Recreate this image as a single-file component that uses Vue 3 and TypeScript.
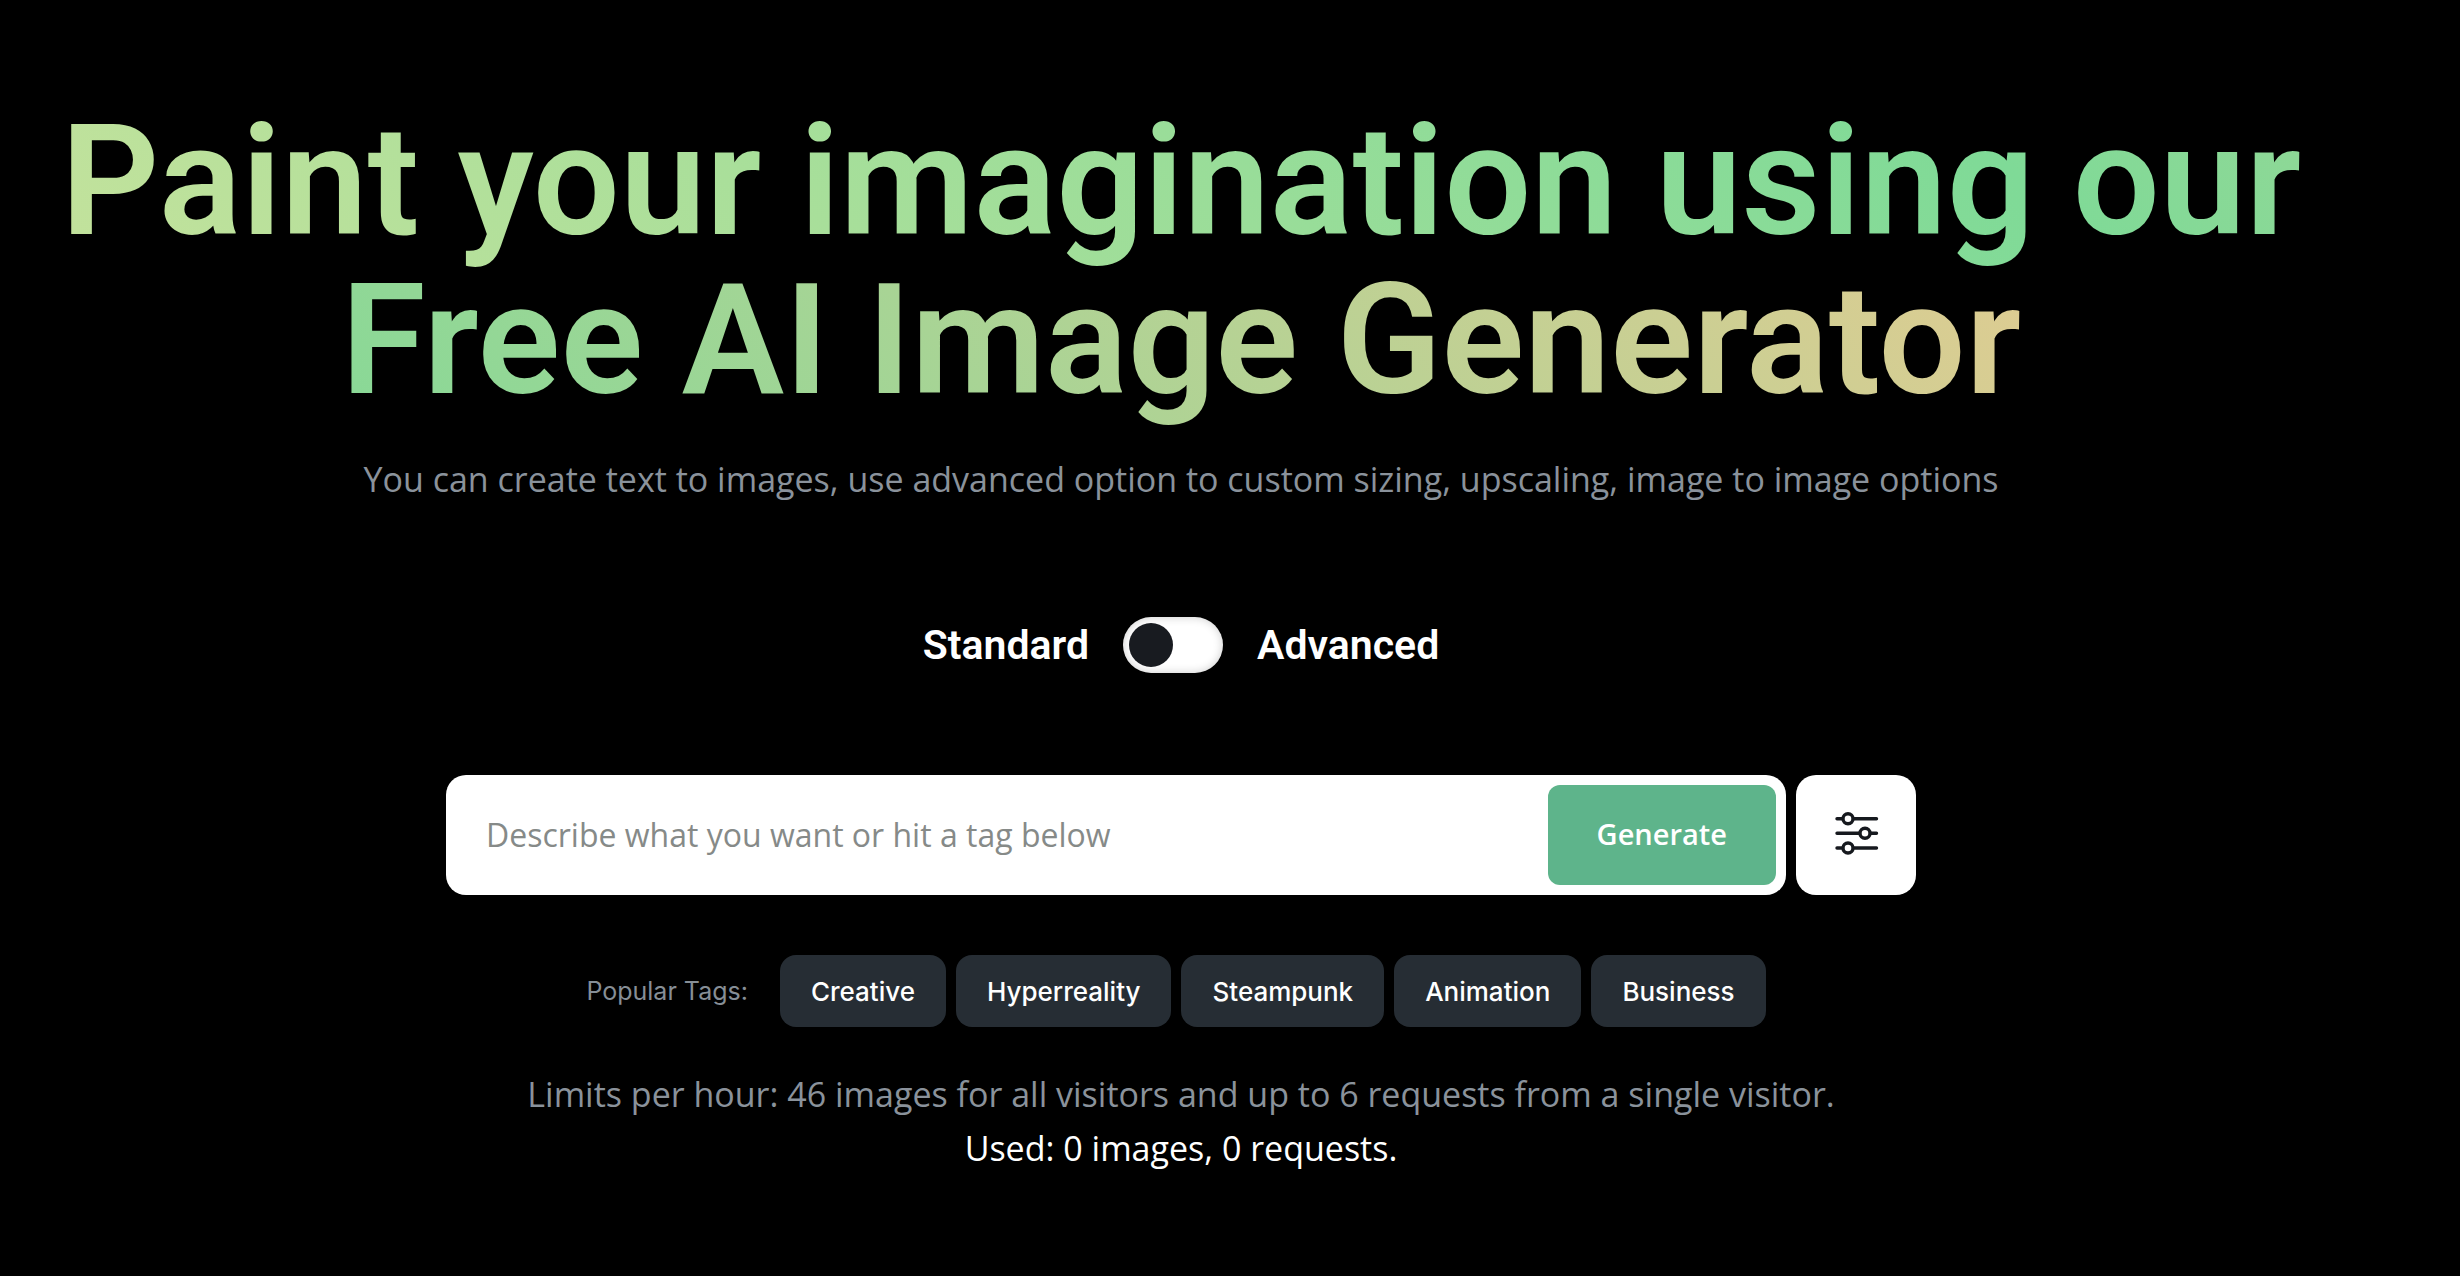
<script setup lang="ts">
import { ref } from 'vue'

const tags: string[] = ['Creative', 'Hyperreality', 'Steampunk', 'Animation', 'Business']
const prompt = ref('')
const advanced = ref(false)
const usedImages = ref(0)
const usedRequests = ref(0)

function addTag(tag: string): void {
  prompt.value = prompt.value ? `${prompt.value}, ${tag}` : tag
}
</script>

<template>
  <main class="page">
    <h1 class="title"><span class="gradient">Paint your imagination using our Free AI Image Generator</span></h1>
    <p class="text">You can create text to images, use advanced option to custom sizing, upscaling, image to image options</p>

    <div class="mode">
      <label for="mode-switch">Standard</label>
      <input id="mode-switch" v-model="advanced" class="switch" type="checkbox" role="switch" />
      <label for="mode-switch">Advanced</label>
    </div>

    <form class="search" @submit.prevent>
      <div class="field">
        <input v-model="prompt" class="prompt" type="text" aria-label="Prompt" placeholder="Describe what you want or hit a tag below" />
        <button class="generate" type="submit">Generate</button>
      </div>
      <button class="settings" type="button" aria-label="Settings">
        <svg viewBox="0 0 48 48" width="48" height="48" fill="none" stroke="#16191e" stroke-width="3.4" stroke-linecap="round">
          <path d="M5 7.700H10.500M21.500 7.700H44.500M5 22.300H27.500M38.500 22.300H44.500M5 37H10.500M21.500 37H44.500" />
          <circle cx="16" cy="7.700" r="5" />
          <circle cx="33" cy="22.300" r="5" />
          <circle cx="16" cy="37" r="5" />
        </svg>
      </button>
    </form>

    <div class="tags">
      <span class="tags-label">Popular Tags:</span>
      <button v-for="tag in tags" :key="tag" class="tag" type="button" @click="addTag(tag)">{{ tag }}</button>
    </div>

    <div class="limits">
      <p class="text">Limits per hour: 46 images for all visitors and up to 6 requests from a single visitor.</p>
      <p class="text used">Used: {{ usedImages }} images, {{ usedRequests }} requests.</p>
    </div>
  </main>
</template>

<style>
body {
  margin: 0;
  background: #000;
}
</style>

<style scoped>
.page {
  box-sizing: border-box;
  min-height: 100vh;
  padding: 102px 98px 100px 0;
  display: flex;
  flex-direction: column;
  align-items: center;
  background: #000;
  color: #fff;
  font-family: "Open Sans", "Noto Sans", sans-serif;
}

.title {
  margin: 0 0 32px;
  font-family: Roboto, sans-serif;
  font-size: 154px;
  font-weight: 600;
  line-height: 159px;
  text-align: center;
}

.gradient {
  background: linear-gradient(45deg, #c3e29c 0%, #7fda97 50%, #dfcc92 100%);
  -webkit-background-clip: text;
  background-clip: text;
  color: transparent;
}

.text {
  margin: 0;
  color: #8a929b;
  font-size: 34px;
  line-height: 54px;
  text-align: center;
}

.mode {
  display: flex;
  align-items: center;
  gap: 34px;
  margin: 111px 0 102px;
  font-family: Roboto, sans-serif;
  font-size: 41px;
  font-weight: 600;
  line-height: 56px;
}

.switch {
  appearance: none;
  box-sizing: border-box;
  width: 100px;
  height: 56px;
  margin: 0;
  padding: 6px;
  border-radius: 28px;
  background: #fff;
  box-shadow: inset 0 0 10px rgba(0, 0, 0, 0.2);
  cursor: pointer;
}

.switch::before {
  content: "";
  display: block;
  width: 44px;
  height: 44px;
  border-radius: 50%;
  background: #181b20;
}

.switch:checked::before {
  margin-left: auto;
}

.search {
  display: flex;
  gap: 10px;
  width: 100%;
  max-width: 1470px;
}

.field {
  flex: 1;
  display: flex;
  box-sizing: border-box;
  height: 120px;
  padding: 10px;
  border-radius: 20px;
  background: #fff;
}

.prompt {
  flex: 1;
  min-width: 0;
  padding: 0 30px 2px;
  border: 0;
  outline: 0;
  background: transparent;
  color: #16191e;
  font-family: inherit;
  font-size: 32px;
}

.prompt::placeholder {
  color: #868a88;
  opacity: 1;
}

.generate {
  padding: 0 49px 4px;
  border: 0;
  border-radius: 12px;
  background: #5eb48b;
  color: #fff;
  font-family: inherit;
  font-size: 29px;
  font-weight: 600;
  cursor: pointer;
}

.settings {
  display: flex;
  align-items: center;
  justify-content: center;
  width: 120px;
  padding: 0;
  border: 0;
  border-radius: 20px;
  background: #fff;
  cursor: pointer;
}

.tags {
  display: flex;
  align-items: center;
  margin: 60px 0 40px;
  font-family: Inter, sans-serif;
  line-height: 36px;
}

.tags-label {
  margin-right: 32px;
  color: #868e96;
  font-size: 25px;
}

.tag {
  height: 72px;
  margin-right: 10px;
  padding: 0 31px;
  border: 0;
  border-radius: 16px;
  background: #262d34;
  color: #fff;
  font-family: inherit;
  font-size: 26px;
  font-weight: 500;
  cursor: pointer;
}

.used {
  color: #fff;
}
</style>
